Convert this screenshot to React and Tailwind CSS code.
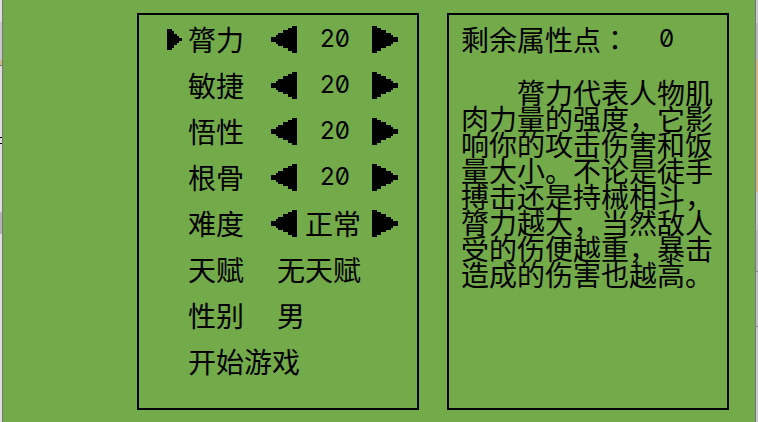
import { useState } from 'react'

const STATS = [
  { id: 'strength', label: '膂力' },
  { id: 'agility', label: '敏捷' },
  { id: 'wisdom', label: '悟性' },
  { id: 'bone', label: '根骨' },
]

const LEVELS = ['简单', '正常', '困难']

const LEFT_EDGE = [
  'h-[22px] bg-[#dedede]',
  'h-[38px] bg-[#c9c9cb]',
  'h-[5px] bg-[#cdb98b]',
  'h-px bg-[#777777]',
  'h-[71px] bg-[#dedede]',
  'h-px bg-black',
  'h-[5px] bg-[#dedede]',
  'h-px bg-black',
  'h-[68px] bg-[#dedede]',
  'h-[22px] bg-[#b4b4b4]',
  'grow bg-[#dedede]',
]

const RIGHT_EDGE = [
  'h-[23px] bg-[#c9c9cd]',
  'h-9 bg-[#b9b9bf]',
  'h-[133px] bg-[#cdb98b]',
  'h-[38px] bg-[#c9c9cd]',
  'h-[41px] bg-[#b9b9bf]',
  'h-px bg-[#8b8b90]',
  'h-[54px] bg-[#c0c0c6]',
  'h-px bg-[#8b8b90]',
  'grow bg-[#c9c9cd]',
]

const Edge = ({ segments }) => (
  <div className="flex w-[2px] shrink-0 flex-col">
    {segments.map((s, i) => (
      <div key={i} className={s} />
    ))}
  </div>
)

const Arrow = ({ flip, label, onClick }) => (
  <button type="button" aria-label={label} onClick={onClick} className="shrink-0 cursor-pointer">
    <svg
      viewBox="0 0 26 27"
      className={flip ? 'block h-[27px] w-[26px] -scale-x-100' : 'block h-[27px] w-[26px]'}
      shapeRendering="crispEdges"
    >
      <path d="M0 0H5V2H9V4H14V7H19V9H21V11H26V16H21V18H19V20H14V22H9V25H5V27H0Z" />
    </svg>
  </button>
)

const Cursor = () => (
  <svg viewBox="0 0 15 21" className="h-[21px] w-[15px]" shapeRendering="crispEdges">
    <path d="M0 0H5V2H7V5H10V7H12V9H15V12H12V14H10V16H7V19H5V21H0Z" />
  </svg>
)

const Row = ({ active, label, children }) => (
  <li className="flex h-[46px] items-center pl-7">
    <span className="w-[21px] shrink-0">{active && <Cursor />}</span>
    <span className="w-14 shrink-0">{label}</span>
    {children}
  </li>
)

const Stepper = ({ name, value, numeric, onPrev, onNext }) => (
  <div className="flex items-center pl-[27px]">
    <Arrow flip label={`${name} -`} onClick={onPrev} />
    <output
      className={
        numeric
          ? 'mr-[11px] ml-2 w-14 pl-1 text-center font-[Inter,sans-serif] text-2xl slashed-zero'
          : 'mr-[11px] ml-2 w-14 whitespace-nowrap'
      }
    >
      {value}
    </output>
    <Arrow label={`${name} +`} onClick={onNext} />
  </div>
)

const App = () => {
  const [points, setPoints] = useState(0)
  const [stats, setStats] = useState({ strength: 20, agility: 20, wisdom: 20, bone: 20 })
  const [level, setLevel] = useState(1)
  const [active, setActive] = useState('strength')

  const change = (id, delta) => {
    setActive(id)
    if (points - delta < 0 || stats[id] + delta < 10) return
    setStats({ ...stats, [id]: stats[id] + delta })
    setPoints(points - delta)
  }

  const changeLevel = (delta) => {
    setActive('level')
    setLevel((level + delta + LEVELS.length) % LEVELS.length)
  }

  return (
    <div
      lang="zh-CN"
      className="flex min-h-screen bg-[#73aa4a] font-['Noto_Sans_CJK_SC',sans-serif] text-[28px] text-black"
    >
      <Edge segments={LEFT_EDGE} />
      <main className="grid grow grid-cols-2 gap-7 border-x border-[#777777] pt-[13px] pr-[26px] pb-3 pl-[134px]">
        {/* Attributes */}
        <section className="border-2 border-black pt-px">
          <ul className="leading-[46px]">
            {STATS.map((s) => (
              <Row key={s.id} label={s.label} active={active === s.id}>
                <Stepper
                  numeric
                  name={s.label}
                  value={stats[s.id]}
                  onPrev={() => change(s.id, -1)}
                  onNext={() => change(s.id, 1)}
                />
              </Row>
            ))}
            <Row label="难度" active={active === 'level'}>
              <Stepper
                name="难度"
                value={LEVELS[level]}
                onPrev={() => changeLevel(-1)}
                onNext={() => changeLevel(1)}
              />
            </Row>
            <Row label="天赋">
              <span className="pl-[33px]">无天赋</span>
            </Row>
            <Row label="性别">
              <span className="pl-[33px]">男</span>
            </Row>
            <li className="flex h-[46px] items-center pl-[49px]">
              <button type="button" className="cursor-pointer">开始游戏</button>
            </li>
          </ul>
        </section>

        {/* Description */}
        <section className="border-2 border-black px-3 pt-px">
          <div className="flex h-[46px] items-center leading-[46px]">
            <span>剩余属性点</span>
            <span lang="zh-TW" className="font-['Noto_Sans_CJK_TC',sans-serif]">：</span>
            <span className="pl-[30px] font-[Inter,sans-serif] text-2xl slashed-zero">{points}</span>
          </div>
          <p className="mt-[17px] indent-14 leading-[26px]">
            膂力代表人物肌肉力量的强度，它影响你的攻击伤害和饭量大小。不论是徒手搏击还是持械相斗，膂力越大，当然敌人受的伤便越重，暴击造成的伤害也越高。
          </p>
        </section>
      </main>
      <Edge segments={RIGHT_EDGE} />
    </div>
  )
}

export default App
